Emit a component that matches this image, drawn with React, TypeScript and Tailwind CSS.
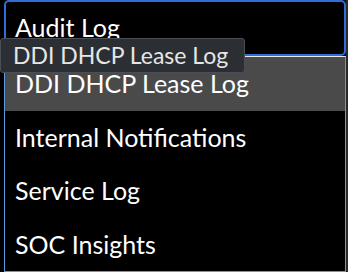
const items = ['DDI DHCP Lease Log', 'Internal Notifications', 'Service Log', 'SOC Insights']

export default function App() {
    return (
        <div className="relative w-[348px] h-[272px] bg-black overflow-hidden font-['Lato',sans-serif]">
            <div className="flex">
                <div className="ml-[4px] w-[342px] flex flex-col">
                    <div className="h-[56px] flex items-center pl-[9px] pb-[1px] border-2 border-[#2f6ddb] rounded-[5px] bg-black text-white text-[25px]">
                        Audit Log
                    </div>
                    <div className="flex flex-col border border-[#5a9be8] border-t-[#e8e8e8] bg-black text-white text-[25px]">
                        {items.map((item, index) => (
                            <div key={index} className={`h-[53.5px] flex items-center pl-[10px] ${index === 0 ? 'bg-[#4a4a4a]' : ''}`}>
                                {item}
                            </div>
                        ))}
                    </div>
                </div>
                <div className="flex-1 bg-[#2a2a2a]" />
            </div>
            <div className="absolute left-0 top-[38px] h-[35px] w-[245px] flex items-center pl-[12px] bg-[#2b2e33] border border-[#4b4f55] rounded-[3px] text-[#e6e6e6] text-[23px]">
                DDI DHCP Lease Log
            </div>
        </div>
    )
}
